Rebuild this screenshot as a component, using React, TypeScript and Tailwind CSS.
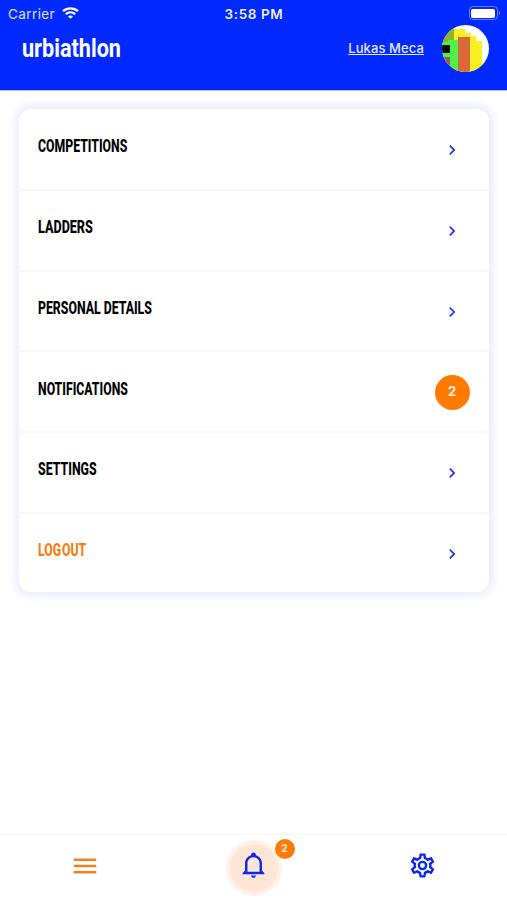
import React from "react";
import clsx from "clsx";

const ICONS = {
  chevron: "M8.59 16.58L13.17 12L8.59 7.41L10 6L16 12L10 18L8.59 16.58Z",
  menu: "M3 6H21V8H3V6M3 11H21V13H3V11M3 16H21V18H3V16Z",
  bell: "M10 21H14C14 22.1 13.1 23 12 23S10 22.1 10 21M21 19V20H3V19L5 17V11C5 7.9 7 5.2 10 4.3V4C10 2.9 10.9 2 12 2S14 2.9 14 4V4.3C17 5.2 19 7.9 19 11V17L21 19M17 11C17 8.2 14.8 6 12 6S7 8.2 7 11V18H17V11Z",
  cog: "M12 8A4 4 0 0 1 16 12A4 4 0 0 1 12 16A4 4 0 0 1 8 12A4 4 0 0 1 12 8M12 10A2 2 0 0 0 10 12A2 2 0 0 0 12 14A2 2 0 0 0 14 12A2 2 0 0 0 12 10M10 22C9.75 22 9.54 21.82 9.5 21.58L9.13 18.93C8.5 18.68 7.96 18.34 7.44 17.94L4.95 18.95C4.73 19.03 4.46 18.95 4.34 18.73L2.34 15.27C2.21 15.05 2.27 14.78 2.46 14.63L4.57 12.97L4.5 12L4.57 11L2.46 9.37C2.27 9.22 2.21 8.95 2.34 8.73L4.34 5.27C4.46 5.05 4.73 4.96 4.95 5.05L7.44 6.05C7.96 5.66 8.5 5.32 9.13 5.07L9.5 2.42C9.54 2.18 9.75 2 10 2H14C14.25 2 14.46 2.18 14.5 2.42L14.87 5.07C15.5 5.32 16.04 5.66 16.56 6.05L19.05 5.05C19.27 4.96 19.54 5.05 19.66 5.27L21.66 8.73C21.79 8.95 21.73 9.22 21.54 9.37L19.43 11L19.5 12L19.43 13L21.54 14.63C21.73 14.78 21.79 15.05 21.66 15.27L19.66 18.73C19.54 18.95 19.27 19.04 19.05 18.95L16.56 17.95C16.04 18.34 15.5 18.68 14.87 18.93L14.5 21.58C14.46 21.82 14.25 22 14 22H10M11.25 4L10.88 6.61C9.68 6.86 8.62 7.5 7.85 8.39L5.44 7.35L4.69 8.65L6.8 10.2C6.4 11.37 6.4 12.64 6.8 13.8L4.68 15.36L5.43 16.66L7.86 15.62C8.63 16.5 9.68 17.14 10.87 17.38L11.24 20H12.76L13.13 17.39C14.32 17.14 15.37 16.5 16.14 15.62L18.57 16.66L19.32 15.36L17.2 13.81C17.6 12.64 17.6 11.37 17.2 10.2L19.31 8.65L18.56 7.35L16.15 8.39C15.38 7.5 14.32 6.86 13.12 6.62L12.75 4H11.25Z",
};

const Icon = ({ name, className }: { name: keyof typeof ICONS; className?: string }): JSX.Element => (
  <svg viewBox="0 0 24 24" fill="currentColor" className={className}>
    <path d={ICONS[name]} />
  </svg>
);

// Menu rows data
const menuItems = [
  { id: 1, text: "COMPETITIONS", scale: "scale-x-[0.7]" },
  { id: 2, text: "LADDERS", scale: "scale-x-[0.72]" },
  { id: 3, text: "PERSONAL DETAILS", scale: "scale-x-[0.702]" },
  { id: 4, text: "NOTIFICATIONS", scale: "scale-x-[0.7]", count: 2 },
  { id: 5, text: "SETTINGS", scale: "scale-x-[0.705]" },
  { id: 6, text: "LOG OUT", scale: "scale-x-[0.7] [word-spacing:-3px]", accent: true },
];

const StatusBar = (): JSX.Element => (
  <div className="grid grid-cols-3 items-center h-7 pl-[8px] pr-[7px] font-['Inter',sans-serif] text-[13.5px]">
    <div className="flex items-center gap-[7px] text-white/85">
      <span className="tracking-[0.4px]">Carrier</span>
      <svg viewBox="0 0 17 12" className="w-[17px] h-3 mb-0.5 text-white" fill="none" stroke="currentColor">
        <path d="M1 4.2C5.2 0.3 11.8 0.3 16 4.2" strokeWidth="2.3" />
        <path d="M3.8 7.1C6.5 4.7 10.5 4.7 13.2 7.1" strokeWidth="2.2" />
        <path d="M8.5 11.8L6 9.4C7.4 8.2 9.6 8.2 11 9.4Z" fill="currentColor" stroke="none" />
      </svg>
    </div>
    <span className="text-center font-semibold text-[13.5px] tracking-[0.6px] text-white/95 whitespace-nowrap">
      3:58 PM
    </span>
    <div className="flex items-center justify-end gap-px mb-[2px]">
      <div className="w-[29px] h-[14px] p-[1.5px] rounded-[4px] border border-white/40">
        <div className="w-full h-full rounded-[2px] bg-white" />
      </div>
      <div className="w-[1.5px] h-1 rounded-r bg-white/40" />
    </div>
  </div>
);

const Avatar = (): JSX.Element => (
  <svg viewBox="0 0 47 47" className="w-[47px] h-[47px] rounded-full">
    <rect width="47" height="47" fill="#fff" />
    <path d="M12 4H23V8H29V11H34V16H40V47H12Z" fill="#f9f021" />
    <path d="M0 0H12V17H0Z" fill="#8bb52c" />
    <path d="M0 17H6V15H16V47H0Z" fill="#51f246" />
    <path d="M0 20H8V28H0Z" fill="#050b05" />
    <path d="M0 32H8V47H0Z" fill="#8f6550" />
    <path d="M16 12H28V47H16Z" fill="#d9683a" />
  </svg>
);

const App = (): JSX.Element => {
  return (
    <div className="flex flex-col h-[900px] w-full bg-white overflow-hidden">
      <header className="h-[91px] shrink-0 bg-[#0029ff] border-b border-[#b5bfff] text-white">
        <StatusBar />
        <div className="flex items-center justify-between h-[41px] pl-[21.5px] pr-[18px]">
          <span className="inline-block w-[100px] origin-left scale-x-[0.865] whitespace-nowrap font-['Roboto',sans-serif] font-bold text-[25px] leading-none">
            urbiathlon
          </span>
          <div className="flex items-center gap-[18px]">
            <a className="font-['Inter',sans-serif] text-[13px] font-medium tracking-[0.1px] text-white/90 underline underline-offset-1 whitespace-nowrap">
              Lukas Meca
            </a>
            <Avatar />
          </div>
        </div>
      </header>

      <main className="flex-1 px-[18.5px] pt-[17.5px]">
        <ul className="rounded-xl bg-white shadow-[0_0_7px_5px_#eceeff]">
          {menuItems.map((item, index) => (
            <li
              key={item.id}
              className={clsx(
                "flex justify-between items-center h-[80.65px] pl-[19px] pr-[19px]",
                index > 0 && "border-t-[2px] border-[#f7f8fc]"
              )}
            >
              <span
                className={clsx(
                  "inline-block origin-left whitespace-nowrap font-['Roboto',sans-serif] font-extrabold text-[17.5px] leading-5 mb-[6px]",
                  item.scale,
                  item.accent ? "text-[#f57c0f]" : "text-black"
                )}
              >
                {item.text}
              </span>
              <div className="flex items-center justify-center w-[35px] mt-[2px]">
                {item.count ? (
                  <span className="flex items-center justify-center w-[35px] h-[35px] -mt-px rounded-full bg-[#ff7a00] text-white/90 font-['Inter',sans-serif] font-bold text-[13px]">
                    {item.count}
                  </span>
                ) : (
                  <Icon name="chevron" className="w-5 h-5 text-[#1f36e0]" />
                )}
              </div>
            </li>
          ))}
        </ul>
      </main>

      <nav className="grid grid-cols-3 items-center h-[66px] shrink-0 border-t border-[#f3f3f5]">
        <div className="flex justify-center mb-[4px]">
          <Icon name="menu" className="w-[30px] h-[30px] text-[#f0821e]" />
        </div>
        <div className="flex justify-center">
          <div className="relative flex items-center justify-center w-[56px] h-[56px] rounded-full bg-[#fff1e7]">
            <div className="flex items-center justify-center w-[48px] h-[48px] rounded-full bg-[#ffe6d4]">
              <Icon name="bell" className="w-[29px] h-[29px] mb-[6px] text-[#0a28f0]" />
            </div>
            <span className="absolute -top-px -right-[13px] flex items-center justify-center w-5 h-5 rounded-full bg-[#ff7a00] text-white/90 font-['Inter',sans-serif] font-bold text-[10px]">
              2
            </span>
          </div>
        </div>
        <div className="flex justify-center mb-[4px]">
          <Icon name="cog" className="w-[29px] h-[29px] text-[#0a28f0]" />
        </div>
      </nav>
    </div>
  );
};

export default App;
